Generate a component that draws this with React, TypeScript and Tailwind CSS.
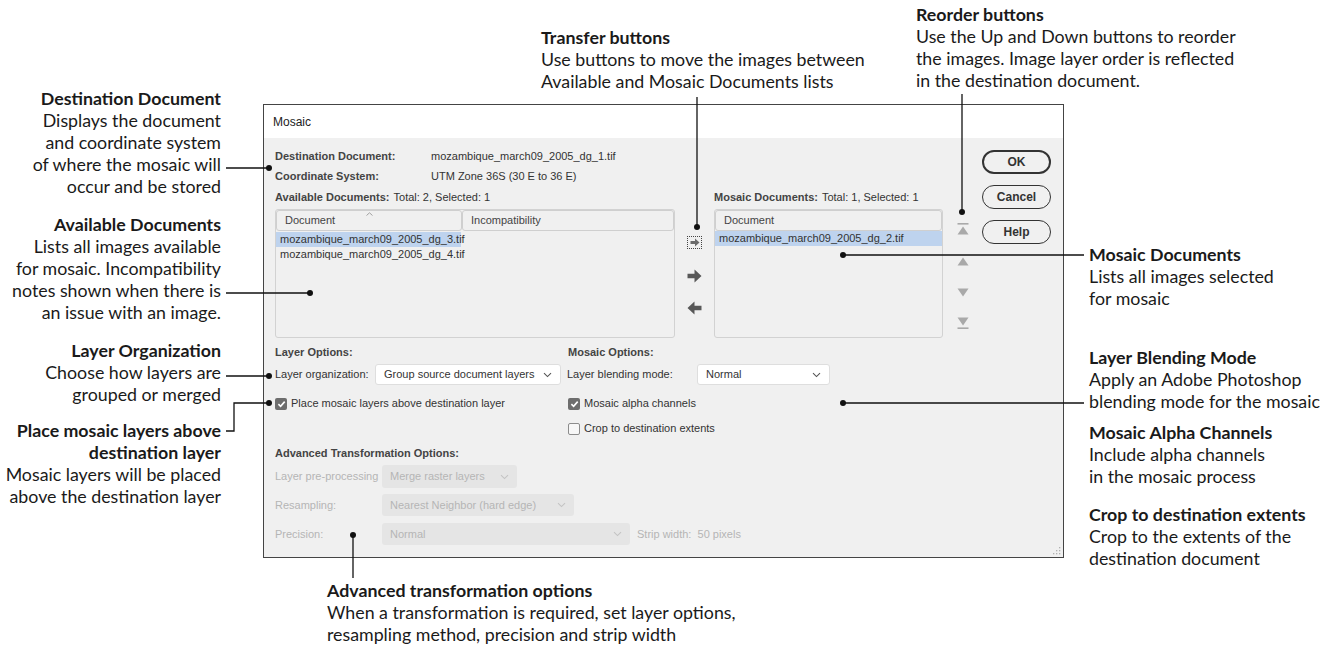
import React from 'react';
import clsx from 'clsx';

const Chevron = ({ className = '' }: { className?: string }) => (
  <svg width="9" height="6" viewBox="0 0 9 6" className={className}>
    <path d="M1 1.2 4.5 4.6 8 1.2" fill="none" stroke="currentColor" strokeWidth="1.1" />
  </svg>
);

const Select = ({ value, className, disabled }: { value: string; className: string; disabled?: boolean }) => (
  <div
    className={clsx(
      'flex h-full items-center justify-between rounded-[3px] pl-[8px] pr-[8px]',
      disabled ? 'bg-[#e5e5e5] text-[#b5b5b5]' : 'border border-[#dedede] bg-white text-[#333]',
      className
    )}
  >
    <span>{value}</span>
    <Chevron className={disabled ? 'text-[#c4c4c4]' : 'text-[#555]'} />
  </div>
);

const Checkbox = ({ checked }: { checked?: boolean }) =>
  checked ? (
    <span className="flex h-[12px] w-[12px] items-center justify-center rounded-[2px] bg-[#6d6d6d]">
      <svg width="9" height="8" viewBox="0 0 9 8">
        <path d="M1.4 4.2 3.6 6.3 7.7 1.6" fill="none" stroke="#fff" strokeWidth="1.6" />
      </svg>
    </span>
  ) : (
    <span className="h-[12px] w-[12px] rounded-[2px] border border-[#8c8c8c] bg-[#f7f7f7]" />
  );

const ArrowRight = () => (
  <svg width="15" height="14" viewBox="0 0 15 14">
    <path d="M0.5 4.8H7.5V0.6L14.5 7 7.5 13.4V9.2H0.5Z" fill="#585858" />
  </svg>
);

const ArrowLeft = () => (
  <svg width="15" height="14" viewBox="0 0 15 14">
    <path d="M14.5 4.8H7.5V0.6L0.5 7 7.5 13.4V9.2H14.5Z" fill="#585858" />
  </svg>
);

const MoveIn = () => (
  <span className="flex h-[13px] w-[15px] items-center justify-center border border-dotted border-[#444]">
    <svg width="10" height="9" viewBox="0 0 10 9">
      <path d="M0.5 3H5V0.5L9.5 4.5 5 8.5V6H0.5Z" fill="#6a6a6a" />
    </svg>
  </span>
);

const ToTop = () => (
  <svg width="12" height="12" viewBox="0 0 12 12">
    <rect x="0.5" y="0" width="11" height="1.6" fill="#a9a9a9" />
    <path d="M6 3.5 11.5 11.5H0.5Z" fill="#a9a9a9" />
  </svg>
);

const Up = () => (
  <svg width="12" height="9" viewBox="0 0 12 9">
    <path d="M6 0.5 11.5 8.5H0.5Z" fill="#a9a9a9" />
  </svg>
);

const Down = () => (
  <svg width="12" height="9" viewBox="0 0 12 9">
    <path d="M6 8.5 11.5 0.5H0.5Z" fill="#a9a9a9" />
  </svg>
);

const ToBottom = () => (
  <svg width="12" height="12" viewBox="0 0 12 12">
    <path d="M6 8.5 11.5 0.5H0.5Z" fill="#a9a9a9" />
    <rect x="0.5" y="10.4" width="11" height="1.6" fill="#a9a9a9" />
  </svg>
);

const DialogButton = ({ label, primary }: { label: string; primary?: boolean }) => (
  <button
    className={clsx(
      'flex h-[24px] w-[69px] items-center justify-center rounded-full bg-[#f0f0f0] text-[12px] font-bold text-[#333]',
      primary ? 'border-2 border-[#333]' : 'border border-[#333]'
    )}
  >
    {label}
  </button>
);

const Dialog = () => (
  <div className="flex h-[454px] w-[801px] flex-col border border-[#444] bg-white font-['Liberation_Sans',Arial,sans-serif] text-[11px] text-[#333]">
    <div className="flex h-[33px] items-center pl-[9px] pt-[1px] text-[12px] text-[#222]">Mosaic</div>

    <div className="flex flex-1 flex-col bg-[#f0f0f0] pl-[11px] pt-[8px]">
      {/* document lists, transfer and reorder controls, dialog buttons */}
      <div className="flex h-[192px]">
        <div className="flex w-[400px] flex-col">
          <div className="flex h-[20px] items-center">
            <span className="w-[156px] font-bold text-[#444]">Destination Document:</span>
            <span>mozambique_march09_2005_dg_1.tif</span>
          </div>
          <div className="flex h-[21px] items-center">
            <span className="w-[156px] font-bold text-[#444]">Coordinate System:</span>
            <span>UTM Zone 36S (30 E to 36 E)</span>
          </div>
          <div className="flex h-[20px] items-center gap-[4px]">
            <span className="font-bold text-[#444]">Available Documents:</span>
            <span>Total: 2, Selected: 1</span>
          </div>
          <div className="mt-[2px] flex h-[129px] flex-col rounded-[3px] border border-[#d2d2d2] bg-[#f0f0f0]">
            <div className="flex h-[21px]">
              <div className="relative flex w-[186px] items-center rounded-[3px] border border-[#cfcfcf] pl-[8px] text-[#444]">
                Document
                <svg width="7" height="4" viewBox="0 0 7 4" className="absolute left-[89px] top-[1px]">
                  <path d="M0.5 3.5 3.5 0.8 6.5 3.5" fill="none" stroke="#999" strokeWidth="0.9" />
                </svg>
              </div>
              <div className="flex flex-1 items-center rounded-[3px] border border-[#cfcfcf] pl-[8px] text-[#444]">Incompatibility</div>
            </div>
            <div className="mt-[1px] flex h-[15px] w-[185px] items-center bg-[#bed3ee] pl-[4px]">mozambique_march09_2005_dg_3.tif</div>
            <div className="flex h-[15px] items-center pl-[4px]">mozambique_march09_2005_dg_4.tif</div>
          </div>
        </div>

        <div className="flex w-[39px] flex-col items-center">
          <div className="mt-[88px] flex h-[16px] items-center">
            <MoveIn />
          </div>
          <div className="mt-[18px] flex h-[16px] items-center">
            <ArrowRight />
          </div>
          <div className="mt-[16px] flex h-[16px] items-center">
            <ArrowLeft />
          </div>
        </div>

        <div className="flex w-[229px] flex-col pt-[41px]">
          <div className="flex h-[20px] items-center gap-[4px]">
            <span className="font-bold text-[#444]">Mosaic Documents:</span>
            <span>Total: 1, Selected: 1</span>
          </div>
          <div className="mt-[2px] flex h-[129px] flex-col rounded-[3px] border border-[#d2d2d2] bg-[#f0f0f0]">
            <div className="flex h-[21px] items-center rounded-[3px] border border-[#cfcfcf] pl-[8px] text-[#444]">Document</div>
            <div className="flex h-[15px] items-center bg-[#bed3ee] pl-[4px]">mozambique_march09_2005_dg_2.tif</div>
          </div>
        </div>

        <div className="flex w-[39px] flex-col items-center">
          <div className="mt-[77px] flex h-[12px] items-center"><ToTop /></div>
          <div className="mt-[20px] flex h-[12px] items-center"><Up /></div>
          <div className="mt-[19px] flex h-[12px] items-center"><Down /></div>
          <div className="mt-[19px] flex h-[12px] items-center"><ToBottom /></div>
        </div>

        <div className="mt-[4px] flex flex-col gap-[11px]">
          <DialogButton label="OK" primary />
          <DialogButton label="Cancel" />
          <DialogButton label="Help" />
        </div>
      </div>

      {/* layer and mosaic options */}
      <div className="mt-[4px] flex h-[20px] items-center font-bold text-[#444]">
        <span className="w-[293px]">Layer Options:</span>
        <span>Mosaic Options:</span>
      </div>
      <div className="mt-[2px] flex h-[21px] items-center">
        <span className="w-[100px]">Layer organization:</span>
        <Select value="Group source document layers" className="w-[186px]" />
        <span className="ml-[6px] w-[130px]">Layer blending mode:</span>
        <Select value="Normal" className="w-[133px]" />
      </div>
      <div className="mt-[6px] flex h-[25px] items-center">
        <label className="flex w-[293px] items-center gap-[4px]">
          <Checkbox checked />
          Place mosaic layers above destination layer
        </label>
        <label className="flex items-center gap-[4px]">
          <Checkbox checked />
          Mosaic alpha channels
        </label>
      </div>
      <div className="flex h-[25px] items-center pl-[293px]">
        <label className="flex items-center gap-[4px]">
          <Checkbox />
          Crop to destination extents
        </label>
      </div>

      {/* disabled transformation options */}
      <div className="mt-[2px] flex h-[20px] items-center font-bold text-[#444]">Advanced Transformation Options:</div>
      <div className="mt-[2px] flex h-[23px] items-center text-[#b5b5b5]">
        <span className="w-[107px]">Layer pre-processing</span>
        <Select value="Merge raster layers" className="w-[135px]" disabled />
      </div>
      <div className="mt-[6px] flex h-[22px] items-center text-[#b5b5b5]">
        <span className="w-[107px]">Resampling:</span>
        <Select value="Nearest Neighbor (hard edge)" className="w-[192px]" disabled />
      </div>
      <div className="mt-[7px] flex h-[22px] items-center text-[#b5b5b5]">
        <span className="w-[107px]">Precision:</span>
        <Select value="Normal" className="w-[248px]" disabled />
        <span className="ml-[7px]">Strip width:&nbsp; 50 pixels</span>
      </div>
      <div className="flex flex-1 items-end justify-end pb-[2px] pr-[2px]">
        <svg width="8" height="8" viewBox="0 0 8 8">
          <rect x="6" y="0" width="1.3" height="1.3" fill="#b0b0b0" />
          <rect x="3" y="3" width="1.3" height="1.3" fill="#b0b0b0" />
          <rect x="6" y="3" width="1.3" height="1.3" fill="#b0b0b0" />
          <rect x="0" y="6" width="1.3" height="1.3" fill="#b0b0b0" />
          <rect x="3" y="6" width="1.3" height="1.3" fill="#b0b0b0" />
          <rect x="6" y="6" width="1.3" height="1.3" fill="#b0b0b0" />
        </svg>
      </div>
    </div>
  </div>
);

type Note = { title: string[]; body: string[]; pos: string; right?: boolean };

const notes: Note[] = [
  {
    title: ['Destination Document'],
    body: ['Displays the document', 'and coordinate system', 'of where the mosaic will', 'occur and be stored'],
    pos: 'right-[1113px] top-[87px]',
    right: true,
  },
  {
    title: ['Available Documents'],
    body: ['Lists all images available', 'for mosaic. Incompatibility', 'notes shown when there is', 'an issue with an image.'],
    pos: 'right-[1113px] top-[213px]',
    right: true,
  },
  {
    title: ['Layer Organization'],
    body: ['Choose how layers are', 'grouped or merged'],
    pos: 'right-[1113px] top-[339px]',
    right: true,
  },
  {
    title: ['Place mosaic layers above', 'destination layer'],
    body: ['Mosaic layers will be placed', 'above the destination layer'],
    pos: 'right-[1113px] top-[419px]',
    right: true,
  },
  {
    title: ['Transfer buttons'],
    body: ['Use buttons to move the images between', 'Available and Mosaic Documents lists'],
    pos: 'left-[541px] top-[26px]',
  },
  {
    title: ['Reorder buttons'],
    body: ['Use the Up and Down buttons to reorder', 'the images. Image layer order is reflected', 'in the destination document.'],
    pos: 'left-[916px] top-[3px]',
  },
  {
    title: ['Mosaic Documents'],
    body: ['Lists all images selected', 'for mosaic'],
    pos: 'left-[1089px] top-[243px]',
  },
  {
    title: ['Layer Blending Mode'],
    body: ['Apply an Adobe Photoshop', 'blending mode for the mosaic'],
    pos: 'left-[1089px] top-[346px]',
  },
  {
    title: ['Mosaic Alpha Channels'],
    body: ['Include alpha channels', 'in the mosaic process'],
    pos: 'left-[1089px] top-[421px]',
  },
  {
    title: ['Crop to destination extents'],
    body: ['Crop to the extents of the', 'destination document'],
    pos: 'left-[1089px] top-[503px]',
  },
  {
    title: ['Advanced transformation options'],
    body: ['When a transformation is required, set layer options,', 'resampling method, precision and strip width'],
    pos: 'left-[327px] top-[579px]',
  },
];

// leader lines: [path, dot x, dot y]
const leaders: [string, number, number][] = [
  ['M226 168H269', 269, 168],
  ['M226 293H310', 310, 293],
  ['M226 376H269', 269, 376],
  ['M226 431H234V403H269', 269, 403],
  ['M697 97V227', 697, 227],
  ['M962 94V212', 962, 212],
  ['M843 255H1084', 843, 255],
  ['M843 403H1084', 843, 403],
  ['M353 535V578', 353, 535],
];

export default function App() {
  return (
    <div className="relative h-[657px] w-[1334px] overflow-hidden bg-white pl-[263px] pt-[104px]">
      <Dialog />

      {notes.map((n) => (
        <div
          key={n.title[0]}
          className={clsx(
            'absolute whitespace-nowrap font-[Lato,sans-serif] text-[17.8px] leading-[22px] text-[#1a1a1a]',
            n.pos,
            n.right && 'text-right'
          )}
        >
          {n.title.map((t) => (
            <div key={t} className="font-bold">{t}</div>
          ))}
          {n.body.map((t) => (
            <div key={t}>{t}</div>
          ))}
        </div>
      ))}

      <svg className="pointer-events-none absolute inset-0" width="1334" height="657" viewBox="0 0 1334 657">
        {leaders.map(([d, x, y]) => (
          <g key={d}>
            <path d={d} fill="none" stroke="#111" strokeWidth="1.3" />
            <circle cx={x} cy={y} r="3" fill="#111" />
          </g>
        ))}
      </svg>
    </div>
  );
}
